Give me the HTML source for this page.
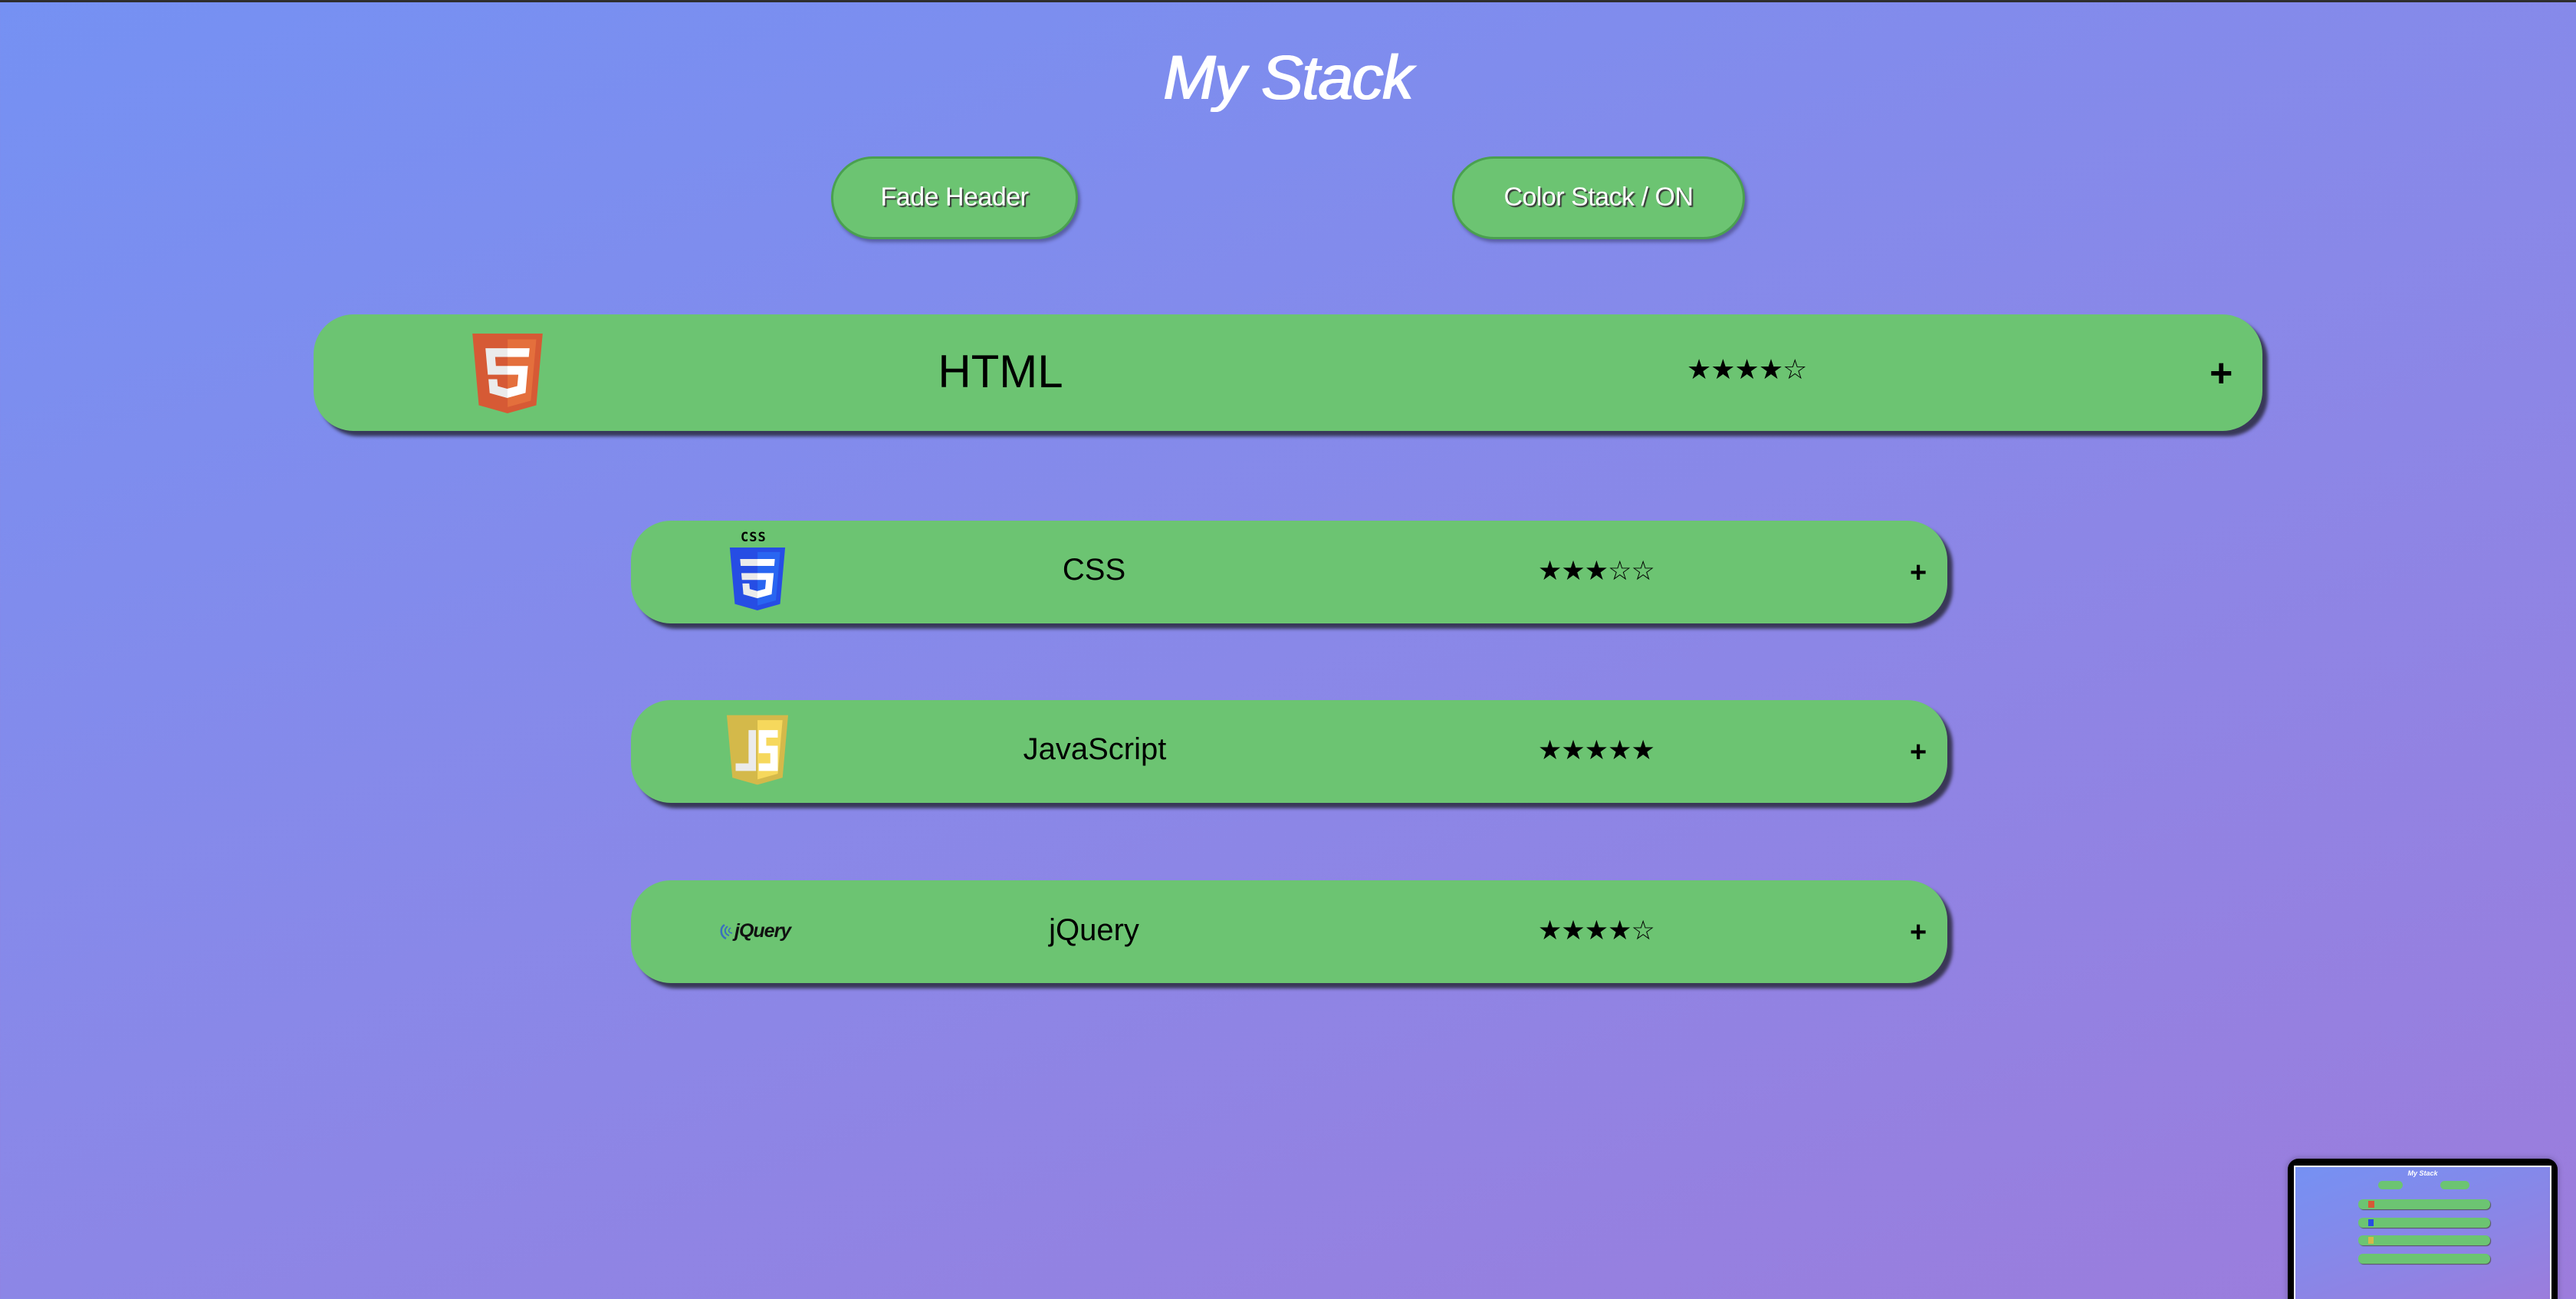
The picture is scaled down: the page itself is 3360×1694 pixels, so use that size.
<!DOCTYPE html>
<html><head><meta charset="utf-8">
<style>
*{margin:0;padding:0;box-sizing:border-box}
html,body{width:3360px;height:1694px;overflow:hidden}
body{background:linear-gradient(160deg,#7591f3 0%,#8988e8 50%,#9c7cdc 100%);font-family:"Liberation Sans",sans-serif;position:relative;border-top:3px solid #2e2e2e}
.abs{position:absolute}
h1{position:absolute;left:0;width:3360px;top:52px;text-align:center;color:#fff;font-style:italic;font-weight:normal;font-size:82px;letter-spacing:-1.5px;text-shadow:1px 0 0 #fff,-1px 0 0 #fff}
.btn{position:absolute;top:201px;height:108px;background:#6cc472;border:3px solid #4aa04f;border-radius:54px;color:#fff;font-size:34px;text-align:center;line-height:100px;text-shadow:2px 2px 1px #3a3a3a;box-shadow:3px 4px 4px rgba(40,40,80,.45);letter-spacing:-0.5px}
.bar{position:absolute;background:#6cc472;border-radius:52px;box-shadow:7px 7px 4px rgba(30,30,40,.75)}
.t{position:absolute;color:#000;text-align:center;transform:translateX(-50%);white-space:nowrap}
.stars{position:absolute;font-family:"DejaVu Sans",sans-serif;color:#000;white-space:nowrap;letter-spacing:-1px}
.plus{position:absolute;font-weight:bold;color:#000;line-height:1}
</style></head><body>
<h1>My Stack</h1>
<div class="btn" style="left:1084px;width:322px">Fade Header</div>
<div class="btn" style="left:1894px;width:382px">Color Stack / ON</div>

<!-- HTML -->
<div class="bar" style="left:409px;top:407px;width:2542px;height:152px"></div>
<svg class="abs" style="left:614px;top:432px" width="96" height="104" viewBox="30 0 451 512">
<path d="M71,460 L30,0 h451 l-41,460 -185,52z" fill="#d65a35"/>
<path d="M256,472 l149,-41 35,-394 H256z" fill="#e46f3c"/>
<path d="M256,208 h-75 l-5,-58 h80 V94 H114 l1,14 14,156 h127z M256,355 l-63,-17 -4,-45 h-56 l8,89 115,32z" fill="#ebebeb"/>
<path d="M255,208 v56 h70 l-7,73 -63,17 v59 l116,-32 1,-10 13,-149 2,-14 H255z M255,94 v56 h137 l1,-12 3,-30 1,-14z" fill="#fff"/>
</svg>
<div class="t" style="left:1305px;top:447px;font-size:60px">HTML</div>
<div class="stars" style="left:2200px;top:459px;font-size:36px">★★★★☆</div>
<div class="plus" style="left:2882px;top:458px;font-size:52px">+</div>

<!-- CSS -->
<div class="bar" style="left:823px;top:676px;width:1717px;height:134px"></div>
<div class="abs" style="left:966px;top:688px;font-size:17px;font-weight:bold;color:#000;letter-spacing:1px;font-family:'DejaVu Sans Mono',monospace">CSS</div>
<svg class="abs" style="left:951px;top:711px" width="74" height="82" viewBox="30 0 451 512">
<path d="M71,460 L30,0 h451 l-41,460 -185,52z" fill="#264de4"/>
<path d="M256,472 l149,-41 35,-394 H256z" fill="#2965f1"/>
<path d="M256,94 H114 l5,56 h137z M256,208 H124 l5,56 h127z M256,355 l-63,-17 -4,-45 h-56 l8,89 115,32z" fill="#ebebeb"/>
<path d="M255,94 v56 h137 l5,-56z M255,208 v56 h70 l-7,73 -63,17 v59 l116,-32 17,-173z" fill="#fff"/>
</svg>
<div class="t" style="left:1427px;top:718px;font-size:40px">CSS</div>
<div class="stars" style="left:2006px;top:722px;font-size:35px">★★★☆☆</div>
<div class="plus" style="left:2491px;top:725px;font-size:38px">+</div>

<!-- JS -->
<div class="bar" style="left:823px;top:910px;width:1717px;height:134px"></div>
<svg class="abs" style="left:948px;top:929px" width="80" height="92" viewBox="30 0 451 512">
<path d="M71,460 L30,0 h451 l-41,460 -185,52z" fill="#d4b94a"/>
<path d="M256,472 l149,-41 35,-394 H256z" fill="#f6d85c"/>
<path d="M190,110 h55 v300 h-150 v-55 h95z" fill="#ebebeb"/>
<path d="M265,110 h140 v55 h-85 v60 h85 v185 h-140 v-55 h85 v-75 h-85z" fill="#fff"/>
</svg>
<div class="t" style="left:1428px;top:952px;font-size:40px">JavaScript</div>
<div class="stars" style="left:2006px;top:956px;font-size:35px">★★★★★</div>
<div class="plus" style="left:2491px;top:959px;font-size:38px">+</div>

<!-- jQuery -->
<div class="bar" style="left:823px;top:1145px;width:1717px;height:134px"></div>
<svg class="abs" style="left:937px;top:1201px" width="20" height="22" viewBox="0 0 20 22">
<path d="M8,2 C2,6 2,16 10,20" stroke="#3a6fbf" stroke-width="2.5" fill="none"/>
<path d="M12,4 C7,8 8,14 14,16" stroke="#3a6fbf" stroke-width="2" fill="none"/>
<path d="M16,6 C12,9 13,12 18,13" stroke="#3a6fbf" stroke-width="1.5" fill="none"/>
</svg>
<div class="abs" style="left:958px;top:1197px;font-size:25px;font-weight:bold;font-style:italic;color:#111;letter-spacing:-1px">jQuery</div>
<div class="t" style="left:1427px;top:1188px;font-size:40px">jQuery</div>
<div class="stars" style="left:2006px;top:1191px;font-size:35px">★★★★☆</div>
<div class="plus" style="left:2491px;top:1194px;font-size:38px">+</div>

<!-- minimap -->
<div class="abs" style="left:2984px;top:1508px;width:352px;height:200px;background:#000;border-radius:14px;box-shadow:0 0 8px rgba(0,0,0,.3)"></div>
<div class="abs" style="left:2992px;top:1517px;width:336px;height:180px;border:2px solid #fff;background:linear-gradient(160deg,#7591f3,#9c7cdc);overflow:hidden">
<div class="abs" style="left:0;width:332px;top:3px;text-align:center;color:#fff;font-style:italic;font-size:9px;font-weight:bold">My Stack</div>
<div class="abs" style="left:108px;top:18px;width:32px;height:11px;background:#6cc472;border-radius:6px"></div>
<div class="abs" style="left:189px;top:18px;width:38px;height:11px;background:#6cc472;border-radius:6px"></div>
<div class="abs" style="left:82px;top:42px;width:172px;height:13px;background:#6cc472;border-radius:6px;box-shadow:1px 1px 1px #555"></div>
<div class="abs" style="left:82px;top:66px;width:172px;height:13px;background:#6cc472;border-radius:6px;box-shadow:1px 1px 1px #555"></div>
<div class="abs" style="left:82px;top:89px;width:172px;height:13px;background:#6cc472;border-radius:6px;box-shadow:1px 1px 1px #555"></div>
<div class="abs" style="left:82px;top:113px;width:172px;height:13px;background:#6cc472;border-radius:6px;box-shadow:1px 1px 1px #555"></div>
<div class="abs" style="left:95px;top:44px;width:8px;height:9px;background:#d65a35"></div>
<div class="abs" style="left:95px;top:68px;width:7px;height:9px;background:#264de4"></div>
<div class="abs" style="left:95px;top:91px;width:7px;height:9px;background:#d4b94a"></div>
</div>
</body></html>
